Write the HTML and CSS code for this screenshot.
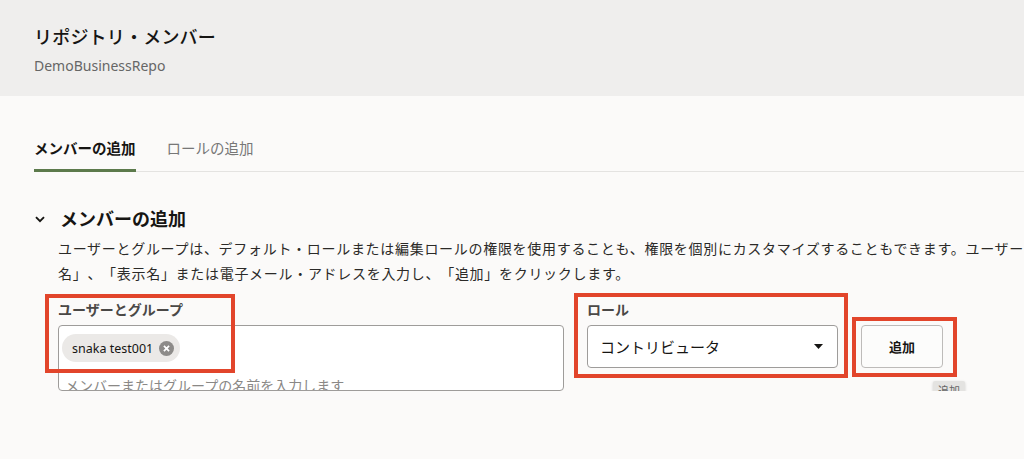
FILE: index.html
```html
<!DOCTYPE html>
<html lang="ja">
<head>
<meta charset="UTF-8">
<meta name="viewport" content="width=device-width, initial-scale=1.0">
<title>リポジトリ・メンバー</title>
<link rel="stylesheet" href="styles.css">
</head>
<body>
<header class="page-head">
    <h1>リポジトリ・メンバー</h1>
    <div class="repo-name">DemoBusinessRepo</div>
</header>

<main class="content">
    <nav class="tabs">
        <a class="tab active">メンバーの追加</a>
        <a class="tab">ロールの追加</a>
    </nav>

    <section class="add-section">
        <h2 class="section-title">
            <svg class="chevron" width="10" height="7" viewBox="0 0 10 7"><path d="M1 1.2 L5 5.2 L9 1.2" fill="none" stroke="#161513" stroke-width="1.9"/></svg>
            メンバーの追加
        </h2>
        <p class="desc">ユーザーとグループは、デフォルト・ロールまたは編集ロールの権限を使用することも、権限を個別にカスタマイズすることもできます。ユーザー<br>名」、「表示名」または電子メール・アドレスを入力し、「追加」をクリックします。</p>

        <div class="form-row">
            <div class="field users">
                <label>ユーザーとグループ</label>
                <div class="tag-box">
                    <span class="chip">snaka test001
                        <svg class="chip-x" width="15" height="15" viewBox="0 0 14 14"><circle cx="7" cy="7" r="7" fill="#8d8b89"/><path d="M4.6 4.6 L9.4 9.4 M9.4 4.6 L4.6 9.4" stroke="#fff" stroke-width="1.6"/></svg>
                    </span>
                    <div class="placeholder">メンバーまたはグループの名前を入力します</div>
                </div>
                <span class="mark mark-users"></span>
            </div>

            <div class="field role">
                <label>ロール</label>
                <div class="select">
                    <span>コントリビュータ</span>
                    <svg width="9" height="5" viewBox="0 0 9 5"><path d="M0 0 L9 0 L4.5 5 Z" fill="#161513"/></svg>
                </div>
                <span class="mark mark-role"></span>
            </div>

            <div class="btn-wrap">
                <button class="add-btn">追加</button>
                <span class="tooltip">追加</span>
                <span class="mark mark-btn"></span>
            </div>
        </div>
    </section>
</main>
</body>
</html>
```

FILE: styles.css
```css
body {
    margin: 0;
    font-family: "Noto Sans", "Noto Sans CJK JP", sans-serif;
    background-color: #fbfaf9;
    color: #161513;
    overflow: hidden;
    text-spacing-trim: space-all;
}

.page-head {
    background-color: #efeeed;
    height: 96px;
    box-sizing: border-box;
    padding: 24px 34px 0;
}

.page-head h1 {
    margin: 0;
    font-family: "Noto Sans CJK JP", sans-serif;
    font-size: 18px;
    font-weight: 500;
    line-height: 24px;
    letter-spacing: 0.2px;
}

.repo-name {
    margin-top: 8px;
    font-size: 14px;
    line-height: 20px;
    color: #666;
}

.content {
    padding-left: 34px;
}

.tabs {
    display: flex;
    gap: 31px;
    padding-top: 38px;
    border-bottom: 1px solid #e4e3e1;
}

.tab {
    font-size: 14.5px;
    line-height: 28px;
    padding-bottom: 7px;
    color: #777;
    margin-bottom: -1px;
    border-bottom: 3px solid transparent;
}

.tab.active {
    color: #161513;
    font-weight: bold;
    border-bottom-color: #5c7a4c;
}

.add-section {
    padding-top: 34px;
}

.section-title {
    display: flex;
    align-items: center;
    margin: 0;
    font-size: 18px;
    line-height: 26px;
    font-weight: bold;
}

.chevron {
    margin: 0 15px 0 1px;
}

.desc {
    margin: 4px 0 0 24px;
    font-size: 14px;
    letter-spacing: 0.7px;
    line-height: 25px;
    white-space: nowrap;
    color: #2b2a28;
}

.form-row {
    display: flex;
    align-items: flex-start;
    gap: 23px;
    margin: 14px 0 0 24px;
}

.field {
    position: relative;
    display: flex;
    flex-direction: column;
    gap: 5px;
}

.field label {
    font-size: 14px;
    line-height: 20px;
    font-weight: bold;
    color: #4a4846;
}

.users {
    width: 506px;
}

.tag-box {
    height: 66px;
    box-sizing: border-box;
    border: 1px solid #9e9c9a;
    border-radius: 4px;
    background-color: #fff;
    padding: 8px 3px 0;
    overflow: hidden;
}

.chip {
    display: inline-flex;
    align-items: center;
    gap: 6px;
    height: 28px;
    padding: 0 6px 0 10px;
    border-radius: 14px;
    background-color: #ebe9e7;
    font-size: 12.5px;
    color: #161513;
}

.placeholder {
    margin-top: 10px;
    padding-left: 3px;
    font-size: 14px;
    line-height: 28px;
    color: #8a8886;
}

.role {
    width: 251px;
}

.select {
    display: flex;
    align-items: center;
    justify-content: space-between;
    height: 43px;
    box-sizing: border-box;
    border: 1px solid #9e9c9a;
    border-radius: 4px;
    background-color: #fff;
    padding: 0 14px 0 12px;
    font-size: 15px;
}

.btn-wrap {
    position: relative;
    margin-top: 25px;
}

.add-btn {
    display: block;
    width: 82px;
    height: 43px;
    border: 1px solid #bdbbb9;
    border-radius: 4px;
    background-color: #fcfcfb;
    font-family: "Noto Sans CJK JP", sans-serif;
    font-size: 13px;
    font-weight: bold;
    color: #161513;
}

.tooltip {
    position: absolute;
    left: 72px;
    top: 56px;
    padding: 0 5px;
    line-height: 18px;
    font-family: "Noto Sans CJK JP", sans-serif;
    font-size: 11px;
    color: #666;
    background-color: #e4e3e1;
    border-radius: 2px;
    box-shadow: 0 1px 3px rgba(0, 0, 0, 0.18);
    white-space: nowrap;
}

/* red highlight boxes from the screenshot annotation */
.mark {
    position: absolute;
    border: 4px solid #e2452b;
    box-sizing: border-box;
    pointer-events: none;
}

.mark-users {
    left: -13px;
    top: -6px;
    width: 190px;
    height: 79px;
}

.mark-role {
    left: -13px;
    top: -7px;
    width: 274px;
    height: 85px;
}

.mark-btn {
    left: -9px;
    top: -8px;
    width: 105px;
    height: 60px;
}
```
